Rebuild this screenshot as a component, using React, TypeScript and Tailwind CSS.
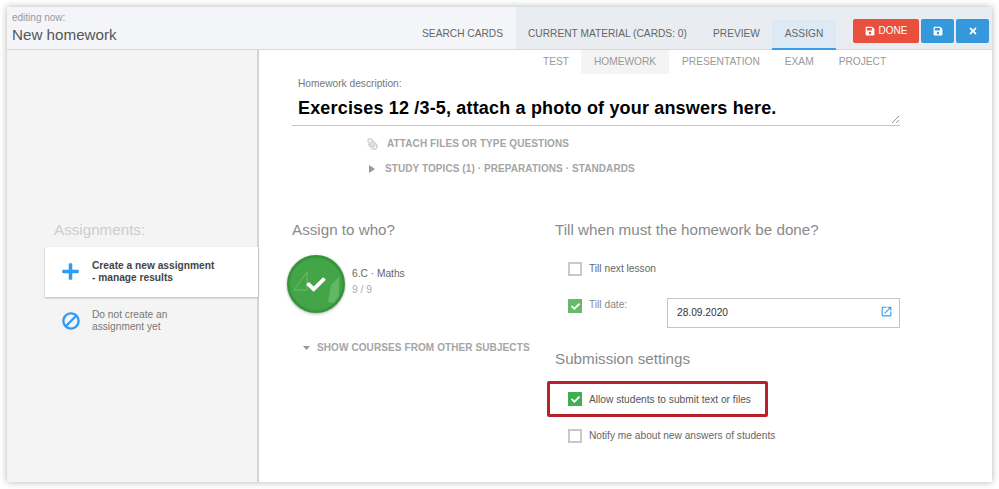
import React from "react";
import { FaSave, FaTimes, FaPlus, FaBan, FaPaperclip, FaCheck } from "react-icons/fa";
import { MdOpenInNew } from "react-icons/md";

function Box({ checked, bright }: { checked?: boolean; bright?: boolean }) {
  if (checked) {
    return (
      <span className={`flex h-[14px] w-[14px] shrink-0 items-center justify-center ${bright ? "bg-[#3fb04f]" : "bg-[#66bb6a]"}`}>
        <FaCheck className="h-[9px] w-[9px] text-white" />
      </span>
    );
  }
  return <span className="block h-[14px] w-[14px] shrink-0 border-2 border-[#c9c9c9] bg-white" />;
}

export default function App() {
  return (
    <div className="h-[489px] w-[999px] overflow-hidden bg-white pl-[7px] pr-[7px] pt-[7px] font-['Liberation_Sans',Arial,sans-serif]">
      <div className="flex h-[475px] w-[985px] flex-col bg-white shadow-[0_0_7px_rgba(0,0,0,0.3)]">
        {/* header */}
        <div className="flex h-[43px] shrink-0 border-b border-[#d6d8da] bg-[#e9edf1]">
          <div className="flex w-[509px] shrink-0 justify-between bg-[#f4f5f9] pl-[5px] pr-[13px]">
            <div className="pt-[4px]">
              <div className="text-[10px] leading-[14px] text-[#9a9a9a]">editing now:</div>
              <div className="text-[15.2px] leading-[19px] text-[#555]">New homework</div>
            </div>
            <div className="whitespace-nowrap pt-[20px] text-[10.2px] leading-[13px] text-[#666]">SEARCH CARDS</div>
          </div>
          <div className="flex w-[320px] shrink-0 pl-[12px]">
            <div className="w-[159px] shrink-0 whitespace-nowrap pt-[20px] text-[10.2px] leading-[13px] text-[#666]">CURRENT MATERIAL (CARDS: 0)</div>
            <div className="w-[73px] shrink-0 pl-[26px] pt-[20px] text-[10.2px] leading-[13px] text-[#666]">PREVIEW</div>
            <div className="ml-[12px] mt-[13px] h-[30px] w-[64px] shrink-0 border-b-2 border-[#3d9be9] bg-[#dde9f5] pt-[7px] text-center text-[10.2px] leading-[13px] text-[#666]">ASSIGN</div>
          </div>
          <div className="ml-[17px] flex h-[24px] gap-[2px] mt-[12px]">
            <button className="flex h-[24px] w-[66px] items-center justify-center gap-[4px] rounded-[2px] bg-[#e94f3d] pb-[1px] text-[10px] text-white">
              <FaSave className="h-[10px] w-[10px]" />
              DONE
            </button>
            <button className="flex h-[24px] w-[33px] items-center justify-center rounded-[2px] bg-[#3498db] text-white">
              <FaSave className="h-[10px] w-[10px]" />
            </button>
            <button className="flex h-[24px] w-[33px] items-center justify-center rounded-[2px] bg-[#3498db] text-white">
              <FaTimes className="h-[10px] w-[10px]" />
            </button>
          </div>
        </div>

        <div className="flex min-h-0 flex-1">
          {/* sidebar */}
          <div className="w-[252px] shrink-0 border-r-2 border-[#d4d4d4] bg-[#f4f4f4] pl-[38px] pt-[170px]">
            <div className="pl-[9px] text-[15.2px] leading-[20px] text-[#cdcdcd]">Assignments:</div>
            <div className="mt-[7px] mr-[-1px] flex h-[50px] items-center bg-white pb-[2px] pl-[16px] shadow-[0_1px_2px_rgba(0,0,0,0.25)]">
              <FaPlus className="h-[19px] w-[19px] text-[#2f9bf3]" />
              <div className="pl-[12px] pt-[2px] text-[10.2px] font-bold leading-[12px] text-[#444]">
                Create a new assignment
                <br />- manage results
              </div>
            </div>
            <div className="mt-[12px] flex items-center pl-[17px]">
              <FaBan className="h-[18px] w-[18px] -scale-x-100 text-[#2f9bf3]" />
              <div className="pl-[12px] text-[10.2px] leading-[12px] text-[#777]">
                Do not create an
                <br />
                assignment yet
              </div>
            </div>
          </div>

          {/* main */}
          <div className="min-w-0 flex-1 pl-[33px]">
            <div className="flex h-[24px] pl-[251px] text-[10.2px] leading-[24px] text-[#999]">
              <span>TEST</span>
              <span className="ml-[12px] w-[88px] bg-[#f4f4f4] text-center">HOMEWORK</span>
              <span className="ml-[13px]">PRESENTATION</span>
              <span className="ml-[25px]">EXAM</span>
              <span className="ml-[25px]">PROJECT</span>
            </div>
            <div className="pl-[6px] pt-[3px] text-[10.2px] leading-[13px] text-[#777]">Homework description:</div>
            <div className="relative mt-[7px] h-[29px] w-[608px] border-b border-[#c4c4c4] pl-[6px] text-[18px] font-bold leading-[22px] tracking-[0.17px] text-black">
              Exercises 12 /3-5, attach a photo of your answers here.
              <svg className="absolute bottom-[1px] right-0 h-[9px] w-[9px]" viewBox="0 0 9 9">
                <path d="M1 8 8 1M5 8 8 5" stroke="#999" strokeWidth="1" />
              </svg>
            </div>
            <div className="flex items-center pl-[75px] pt-[11px] text-[10px] font-bold leading-[13px] tracking-[0.1px] text-[#a5a5a5]">
              <FaPaperclip className="h-[12px] w-[11px] -scale-x-100 text-[#cfcfcf]" />
              <span className="pl-[9px]">ATTACH FILES OR TYPE QUESTIONS</span>
            </div>
            <div className="flex items-center pl-[77px] pt-[12px] text-[10px] font-bold leading-[13px] tracking-[0.08px] text-[#a5a5a5]">
              <svg className="h-[8px] w-[6px]" viewBox="0 0 6 8">
                <path d="M0 0 6 4 0 8Z" fill="#999" />
              </svg>
              <span className="pl-[10px]">STUDY TOPICS (1) · PREPARATIONS · STANDARDS</span>
            </div>

            <div className="flex pt-[45px]">
              <div className="w-[263px] shrink-0">
                <div className="text-[15.2px] leading-[20px] text-[#8a8a8a]">Assign to who?</div>
                <div className="ml-[-5px] mt-[15px] flex">
                  <div className="relative flex h-[58px] w-[58px] items-center justify-center overflow-hidden rounded-full border-[3px] border-[#37953c] bg-[#43a547] shadow-[0_1px_3px_rgba(0,0,0,0.3)]">
                    <svg className="absolute inset-0 h-full w-full" viewBox="0 0 52 52" fill="none">
                      <path d="M4 32 17 14V32Z" stroke="#6dbb70" strokeWidth="1" />
                      <path d="M41 27 49 19V46L38 44Z" fill="#79c27c" opacity="0.6" />
                    </svg>
                    <FaCheck className="relative h-[19px] w-[22px] text-white" />
                  </div>
                  <div className="pl-[7px] pt-[12px]">
                    <div className="text-[10.2px] leading-[14px] text-[#666]">6.C · Maths</div>
                    <div className="pt-[2px] text-[10.2px] leading-[14px] text-[#aaa]">9 / 9</div>
                  </div>
                </div>
                <div className="flex items-center pl-[11px] pt-[28px] text-[10px] font-bold leading-[13px] tracking-[0.1px] text-[#a5a5a5]">
                  <svg className="h-[4px] w-[7px]" viewBox="0 0 7 4">
                    <path d="M0 0H7L3.5 4Z" fill="#999" />
                  </svg>
                  <span className="pl-[7px]">SHOW COURSES FROM OTHER SUBJECTS</span>
                </div>
              </div>

              <div className="flex-1">
                <div className="text-[15.2px] leading-[20px] text-[#8a8a8a]">Till when must the homework be done?</div>
                <div className="flex items-start pl-[13px] pt-[22px] text-[10.2px] leading-[14px] text-[#666]">
                  <Box />
                  <span className="pl-[7px]">Till next lesson</span>
                </div>
                <div className="flex items-start pl-[13px] pt-[22px]">
                  <span className="pt-[1px]"><Box checked /></span>
                  <span className="w-[85px] pl-[7px] text-[10.2px] leading-[14px] text-[#888]">Till date:</span>
                  <div className="flex h-[30px] w-[233px] items-center justify-between border border-[#c4c4c4] pl-[9px] pr-[6px] text-[10.2px] text-[#333]">
                    28.09.2020
                    <MdOpenInNew className="mb-[3px] h-[13px] w-[13px] text-[#2f9bf3]" />
                  </div>
                </div>
                <div className="pt-[21px] text-[15.2px] leading-[20px] text-[#8a8a8a]">Submission settings</div>
                <div className="ml-[-8px] mt-[12px] flex h-[36px] w-[221px] items-center rounded-[2px] border-[3px] border-[#b8202c] pl-[18px] text-[10.2px] text-[#555]">
                  <Box checked bright />
                  <span className="pl-[7px] pt-[1px]">Allow students to submit text or files</span>
                </div>
                <div className="flex items-center pl-[13px] pt-[11px] text-[10.2px] text-[#666]">
                  <Box />
                  <span className="pl-[7px]">Notify me about new answers of students</span>
                </div>
              </div>
            </div>
          </div>
        </div>
      </div>
    </div>
  );
}
